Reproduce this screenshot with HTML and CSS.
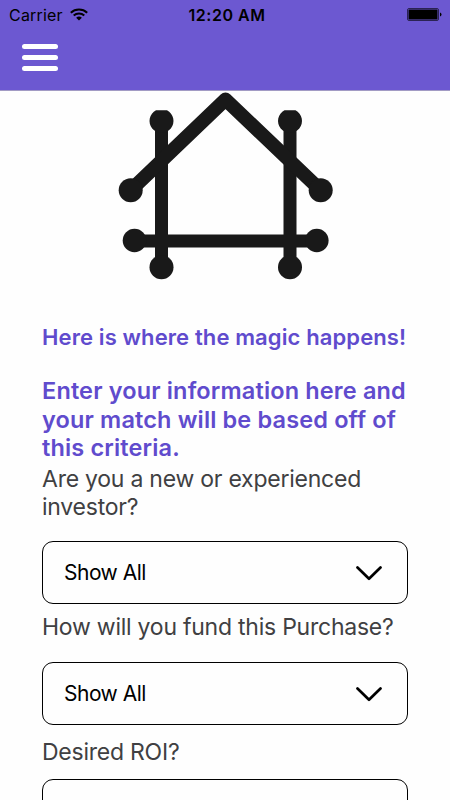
FILE: index.html
```html
<!DOCTYPE html>
<html lang="en">
<head>
	<meta charset="UTF-8">
	<title>Match</title>
	<link rel="stylesheet" href="styles.css">
</head>
<body>
<header class="header">
	<div class="status">
		<div class="carrier">
			<span>Carrier</span>
			<svg width="18" height="13" viewBox="0 0 18 13" fill="none" stroke="#000" stroke-width="2">
				<path d="M.8 4.7C5.4.4 12.6.4 17.200 4.700M3.700 7.600c3-2.700 7.600-2.700 10.600 0"/>
				<path d="M9 12.500L6.100 9.700q2.900-2.200 5.800 0z" fill="#000" stroke="none"/>
			</svg>
		</div>
		<span class="time">12:20 AM</span>
		<svg class="battery" width="35" height="13" viewBox="0 0 35 13">
			<rect x=".5" y=".5" width="31" height="12" rx="1.500" fill="none" stroke="#000" stroke-opacity=".6"/>
			<rect x="1.500" y="1.500" width="29" height="10" rx=".5"/>
			<path d="M33 4.500q1.500 .3 1.500 2t-1.500 2z"/>
		</svg>
	</div>
	<div class="menu"><i></i><i></i><i></i></div>
</header>
<main class="content">
	<svg class="logo" width="216" height="188" viewBox="117 92 216 188">
		<g fill="none" stroke="#191919" stroke-width="13">
			<path d="M161.500 121V267M290 121V267M134 241H317"/>
			<path d="M130.700 190.300L225.500 99.500l95.200 90.800" stroke-width="14" stroke-linejoin="round"/>
		</g>
		<g fill="#191919">
			<path d="M156 110.300h11a12 12 0 1 1-11 0z"/>
			<path d="M284.500 110.300h11a12 12 0 1 1-11 0z"/>
			<circle cx="130.700" cy="190.300" r="12"/>
			<circle cx="320.700" cy="190.300" r="12"/>
			<circle cx="134.500" cy="240.500" r="11.800"/>
			<circle cx="316.800" cy="240.500" r="11.800"/>
			<circle cx="161.500" cy="267.200" r="12"/>
			<circle cx="290" cy="267.200" r="12"/>
		</g>
	</svg>
	<h1>Here is where the magic happens!</h1>
	<h2>Enter your information here and<br>your match will be based off of<br>this criteria.</h2>
	<p class="question">Are you a new or experienced<br>investor?</p>
	<div class="select first">
		<span>Show All</span>
		<svg width="26" height="15" viewBox="0 0 26 15"><path d="M1.500 1.500L13 12.700 24.500 1.500"/></svg>
	</div>
	<p class="question fund">How will you fund this Purchase?</p>
	<div class="select second">
		<span>Show All</span>
		<svg width="26" height="15" viewBox="0 0 26 15"><path d="M1.500 1.500L13 12.700 24.500 1.500"/></svg>
	</div>
	<p class="question roi">Desired ROI?</p>
	<div class="select third"></div>
</main>
</body>
</html>
```
FILE: styles.css
```css
*{box-sizing:border-box}
body{margin:0; height:800px; overflow:hidden; background:#fefefe; font-family:Inter, "Liberation Sans", sans-serif;}
h1,h2,p{margin:0}
svg{display:block}

.header{height:91px; background:#6c58d1; border-bottom:1px solid #a29bc4;}
.status{display:grid; grid-template-columns:1fr auto 1fr; align-items:center; height:29px; padding:0 8px 0 9px;}
.carrier{display:flex; align-items:center; gap:7px; font-size:16px; letter-spacing:.2px;}
.time{margin-left:3px; font-size:16px; font-weight:600; letter-spacing:.55px;}
.battery{justify-self:end}
.menu{display:flex; flex-direction:column; gap:6px; width:36px; margin:15px 0 0 22px;}
.menu i{height:5px; border-radius:3px; background:#fff;}

.content{height:709px; padding:1px 42px 0; overflow:hidden;}
.logo{margin:0 auto}
h1{height:28px; margin-top:43px; color:#604bcd; font-size:22px; font-weight:600; line-height:28px; letter-spacing:.11px; white-space:nowrap;}
h2{margin-top:26px; color:#604bcd; font-size:23.500px; font-weight:600; line-height:28.500px; letter-spacing:.15px; white-space:nowrap;}
.question{margin-top:2px; color:#404042; font-size:23px; line-height:28px; letter-spacing:-.24px; white-space:nowrap;}

.select{display:flex; align-items:center; justify-content:space-between; height:63px; padding:0 25px 0 21px; border:1.500px solid #000; border-radius:11px; font-size:21px; letter-spacing:-.5px;}
.select span{margin-top:1px}
.select svg{margin-top:2px}
.select path{fill:none; stroke:#000; stroke-width:2.700; stroke-linecap:round; stroke-linejoin:round;}
.first{margin-top:20px}
.fund{margin-top:9px}
.second{margin-top:21px}
.roi{margin-top:13px}
.third{margin-top:13px}
```
